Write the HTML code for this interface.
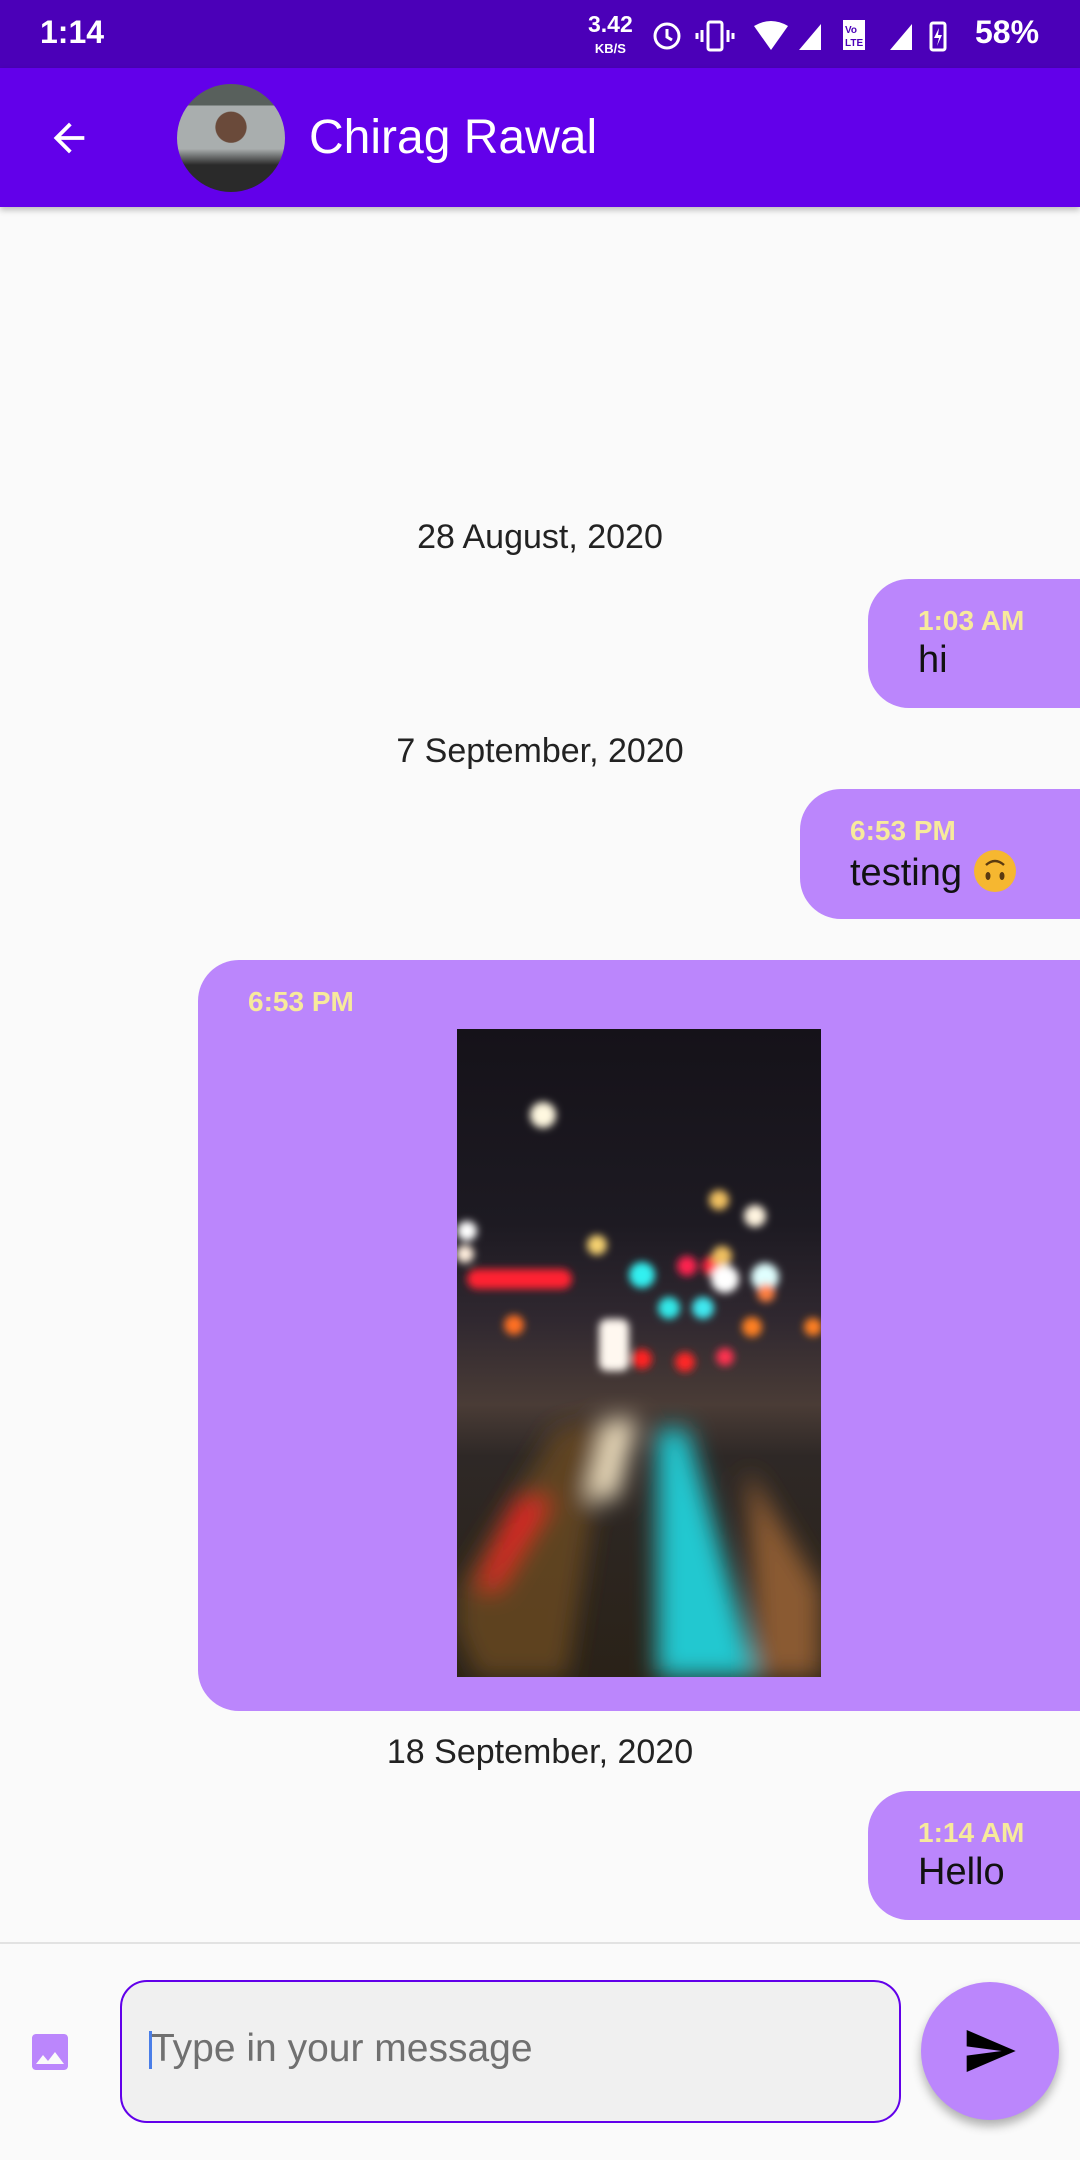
<!DOCTYPE html>
<html><head><meta charset="utf-8"><style>
*{margin:0;padding:0;box-sizing:border-box}
body{width:1080px;height:2160px;background:#fafafa;font-family:"Liberation Sans",sans-serif;position:relative;overflow:hidden}
.abs{position:absolute}
.status{left:0;top:0;width:1080px;height:68px;background:#4b00b8;color:#fff}
.appbar{left:0;top:68px;width:1080px;height:139px;background:#6200ea;box-shadow:0 3px 6px rgba(0,0,0,.25)}
.date{width:1080px;text-align:center;font-size:34px;color:#222;left:0}
.bub{background:#bb86fc;border-radius:41px 0 0 41px}
.time{font-size:28px;font-weight:bold;color:#f7ea9c}
.msg{font-size:38px;color:#111}
</style></head><body>
<div class="abs status">
  <div class="abs" style="left:40px;top:14px;font-size:32px;font-weight:bold">1:14</div>
  <div class="abs" style="left:588px;top:14px;font-size:23px;font-weight:bold;line-height:21px;text-align:center">3.42<br><span style="font-size:13px">KB/S</span></div>
  <svg class="abs" style="left:650px;top:16px" width="400" height="40" viewBox="0 0 400 40">
    <circle cx="17" cy="20" r="12" fill="none" stroke="#fff" stroke-width="3"/><path d="M17 13v8l5 3" stroke="#fff" stroke-width="3" fill="none"/>
    <rect x="58" y="6" width="14" height="28" rx="2" fill="none" stroke="#fff" stroke-width="3"/><path d="M52 14v12M78 14v12M47 17v6M83 17v6" stroke="#fff" stroke-width="3"/>
    <path d="M104 10 Q121 0 138 10 L121 34Z" fill="#fff"/>
    <path d="M149 34 L171 8 V34Z" fill="#fff"/>
    <rect x="193" y="4" width="22" height="30" fill="#fff"/><text x="195" y="17" font-size="10" font-weight="bold" fill="#4b00b8">Vo</text><text x="195" y="30" font-size="10" font-weight="bold" fill="#4b00b8">LTE</text>
    <path d="M240 34 L262 8 V34Z" fill="#fff"/>
    <rect x="281" y="7" width="14" height="27" rx="2" fill="none" stroke="#fff" stroke-width="3"/><path d="M289 12 L284 22 H289 L287 30 L292 19 H288Z" fill="#fff"/>
  </svg>
  <div class="abs" style="left:975px;top:14px;font-size:32px;font-weight:bold">58%</div>
</div>
<div class="abs appbar">
  <svg class="abs" style="left:46px;top:47px" width="46" height="46" viewBox="0 0 24 24"><path d="M20 11H7.8l5.6-5.6L12 4l-8 8 8 8 1.4-1.4L7.8 13H20z" fill="#fff"/></svg>
  <div class="abs" style="left:177px;top:16px;width:108px;height:108px;border-radius:50%;background:radial-gradient(circle at 50% 40%,#6a4a3a 0 18%,transparent 19%),linear-gradient(#58605c 0 20%,#a9aeae 20% 60%,#2a2a2a 75%);overflow:hidden"></div>
  <div class="abs" style="left:309px;top:42px;font-size:48px;color:#fff">Chirag Rawal</div>
</div>

<div class="abs date" style="top:518px">28 August, 2020</div>
<div class="abs bub" style="left:868px;top:579px;width:212px;height:129px">
  <div class="abs time" style="left:50px;top:26px">1:03 AM</div>
  <div class="abs msg" style="left:50px;top:60px">hi</div>
</div>
<div class="abs date" style="top:732px">7 September, 2020</div>
<div class="abs bub" style="left:800px;top:789px;width:280px;height:130px">
  <div class="abs time" style="left:50px;top:26px">6:53 PM</div>
  <div class="abs msg" style="left:50px;top:60px">testing <svg width="44" height="44" viewBox="0 0 44 44" style="vertical-align:-8px"><circle cx="22" cy="22" r="21" fill="#f6b730"/><ellipse cx="15" cy="27" rx="2.5" ry="4" fill="#5a3a10"/><ellipse cx="29" cy="27" rx="2.5" ry="4" fill="#5a3a10"/><path d="M13 16 Q22 8 31 16" stroke="#5a3a10" stroke-width="2.5" fill="none"/></svg></div>
</div>
<div class="abs bub" style="left:198px;top:960px;width:882px;height:751px">
  <div class="abs time" style="left:50px;top:26px">6:53 PM</div>
  <svg class="abs" style="left:259px;top:69px" width="364" height="648" viewBox="0 0 364 648">
    <defs><filter id="b"><feGaussianBlur stdDeviation="4"/></filter><filter id="b2"><feGaussianBlur stdDeviation="12"/></filter>
    <linearGradient id="g" x1="0" y1="0" x2="0" y2="1"><stop offset="0" stop-color="#151219"/><stop offset=".3" stop-color="#1d1a22"/><stop offset=".45" stop-color="#302830"/><stop offset=".58" stop-color="#4a3c36"/><stop offset=".66" stop-color="#2e2826"/><stop offset="1" stop-color="#2a2218"/></linearGradient></defs>
    <rect width="364" height="648" fill="url(#g)"/>
    <g filter="url(#b2)">
      <path d="M150 390 L110 648 H20 L0 600 V560 L100 400Z" fill="#6b4a20" opacity=".8"/>
      <path d="M60 470 L20 560 L40 560 L95 470Z" fill="#e02020"/>
      <path d="M230 400 L300 648 H200 L200 400Z" fill="#22c8d0"/>
      <path d="M290 440 L364 560 V648 H300Z" fill="#8a5a30"/>
      <path d="M150 390 L130 470 L160 470 L180 390Z" fill="#f0e0c0"/>
    </g>
    <g filter="url(#b)">
      <circle cx="86" cy="86" r="13" fill="#fff8e0"/>
      <circle cx="10" cy="202" r="10" fill="#fff"/><circle cx="8" cy="225" r="9" fill="#ffeedd"/>
      <rect x="10" y="240" width="105" height="20" rx="10" fill="#ff2030"/>
      <circle cx="140" cy="216" r="10" fill="#f4d070"/>
      <circle cx="185" cy="246" r="13" fill="#30f0f0"/>
      <circle cx="230" cy="237" r="10" fill="#ff2050"/><circle cx="255" cy="237" r="10" fill="#ff2040"/>
      <circle cx="268" cy="250" r="14" fill="#fff"/><circle cx="308" cy="248" r="14" fill="#e0ffff"/>
      <circle cx="265" cy="227" r="10" fill="#f0c060"/><circle cx="262" cy="171" r="10" fill="#f0c060"/><circle cx="298" cy="187" r="11" fill="#fff4e0"/>
      <circle cx="212" cy="279" r="11" fill="#30e8e8"/><circle cx="246" cy="279" r="11" fill="#40e8f0"/>
      <circle cx="309" cy="264" r="9" fill="#ff8040"/><circle cx="356" cy="298" r="9" fill="#ff8020"/><circle cx="295" cy="298" r="10" fill="#ff8020"/>
      <circle cx="57" cy="296" r="10" fill="#ff7020"/>
      <rect x="142" y="290" width="30" height="52" rx="8" fill="#fff8f0"/>
      <circle cx="185" cy="330" r="10" fill="#ff2020"/><circle cx="228" cy="333" r="10" fill="#ff2828"/><circle cx="268" cy="328" r="9" fill="#ff3050"/>
    </g>
  </svg>
</div>
<div class="abs date" style="top:1733px">18 September, 2020</div>
<div class="abs bub" style="left:868px;top:1791px;width:212px;height:129px">
  <div class="abs time" style="left:50px;top:26px">1:14 AM</div>
  <div class="abs msg" style="left:50px;top:60px">Hello</div>
</div>

<div class="abs" style="left:0;top:1942px;width:1080px;height:2px;background:#e2e2e2"></div>
<svg class="abs" style="left:26px;top:2028px" width="48" height="48" viewBox="0 0 24 24"><path d="M21 19V5c0-1.1-.9-2-2-2H5c-1.1 0-2 .9-2 2v14c0 1.1.9 2 2 2h14c1.1 0 2-.9 2-2zM8.5 13.5l2.5 3 3.5-4.5 4.5 6H5l3.5-4.5z" fill="#bb86fc"/></svg>
<div class="abs" style="left:120px;top:1980px;width:781px;height:143px;border:2px solid #6200ea;border-radius:27px;background:#f0f0f0"></div>
<div class="abs" style="left:149px;top:2031px;width:3px;height:38px;background:#4a7ee8"></div>
<div class="abs" style="left:151px;top:2027px;font-size:39px;color:#707070">Type in your message</div>
<div class="abs" style="left:921px;top:1982px;width:138px;height:138px;border-radius:50%;background:#bb86fc;box-shadow:0 6px 10px rgba(0,0,0,.3)"></div>
<svg class="abs" style="left:962px;top:2023px" width="56" height="56" viewBox="0 0 24 24"><path d="M2.01 21L23 12 2.01 3 2 10l15 2-15 2z" fill="#000"/></svg>
</body></html>
